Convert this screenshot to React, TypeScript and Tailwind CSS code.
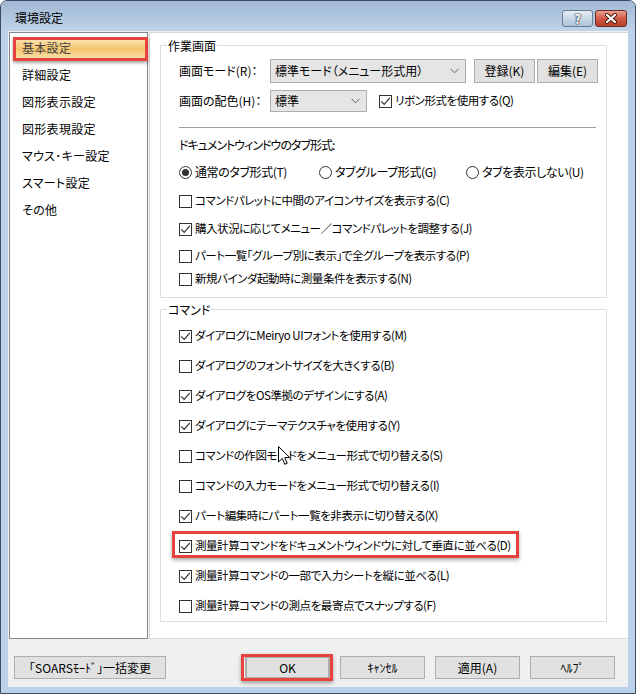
import React from "react";

const Check = ({ checked }: { checked: boolean }) => (
  <span className="w-[13px] h-[13px] border border-[#333333] bg-white flex items-center justify-center shrink-0">
    {checked && (
      <svg width="11" height="11" viewBox="0 0 11 11">
        <path d="M1.2 5.3 L4.2 8.4 L9.8 1.8" fill="none" stroke="#333333" strokeWidth="1.2" />
      </svg>
    )}
  </span>
);

const Radio = ({ checked }: { checked: boolean }) => (
  <span className="w-[13px] h-[13px] rounded-full border border-[#333333] bg-white flex items-center justify-center shrink-0">
    {checked && <span className="w-[7px] h-[7px] rounded-full bg-[#333333]" />}
  </span>
);

const CheckRow = ({ checked, label }: { checked: boolean; label: string }) => (
  <div className="flex items-center gap-[3px] h-[18px] whitespace-nowrap">
    <Check checked={checked} />
    <span className="text-[11.5px] tracking-[-0.45px]">{label}</span>
  </div>
);

const Chevron = () => (
  <svg width="9" height="6" viewBox="0 0 9 6" className="shrink-0">
    <polyline points="0.5,0.8 4.5,4.8 8.5,0.8" fill="none" stroke="#606060" strokeWidth="1" />
  </svg>
);

const navItems = ["基本設定", "詳細設定", "図形表示設定", "図形表現設定", "マウス･キー設定", "スマート設定", "その他"];

const commands: { label: string; checked: boolean; mark?: boolean }[] = [
  { label: "ダイアログにMeiryo UIフォントを使用する(M)", checked: true },
  { label: "ダイアログのフォントサイズを大きくする(B)", checked: false },
  { label: "ダイアログをOS準拠のデザインにする(A)", checked: true },
  { label: "ダイアログにテーマテクスチャを使用する(Y)", checked: true },
  { label: "コマンドの作図モードをメニュー形式で切り替える(S)", checked: false },
  { label: "コマンドの入力モードをメニュー形式で切り替える(I)", checked: false },
  { label: "パート編集時にパート一覧を非表示に切り替える(X)", checked: true },
  { label: "測量計算コマンドをドキュメントウィンドウに対して垂直に並べる(D)", checked: true, mark: true },
  { label: "測量計算コマンドの一部で入力シートを縦に並べる(L)", checked: true },
  { label: "測量計算コマンドの測点を最寄点でスナップする(F)", checked: false },
];

const Btn = ({ children, className = "" }: { children: React.ReactNode; className?: string }) => (
  <div className={`h-[23px] border border-[#adadad] bg-[#e1e1e1] flex items-center justify-center whitespace-nowrap ${className}`}>
    {children}
  </div>
);

export default function App() {
  return (
    <div className="w-[636px] h-[694px] relative bg-[#bcd1ea] rounded-t-[7px] border border-[#3d4b5c] flex flex-col overflow-hidden text-[12px] text-black font-['Noto_Sans_CJK_JP','Noto_Sans',sans-serif] [font-feature-settings:'palt'] leading-none">
      {/* Title bar */}
      <div className="h-[30px] shrink-0 flex items-center pt-[4px] pl-[14px] pr-[8px] bg-gradient-to-b from-[#a0b9d4] to-[#bfd3e9]">
        <span className="text-[12px] text-black">環境設定</span>
        <div className="ml-auto flex items-center gap-[2px]">
          <div className="w-[31px] h-[17px] rounded-[3px] border border-[#6b7c90] bg-gradient-to-b from-[#e6edf5] via-[#c9d7e6] to-[#aec3da] flex items-center justify-center">
            <span className="text-white font-bold text-[13px] leading-none [text-shadow:0_0_1px_#1f2f44,0_0_1px_#1f2f44,0_0_2px_#1f2f44]">?</span>
          </div>
          <div className="w-[32px] h-[17px] rounded-[3px] border border-[#6b2a22] bg-gradient-to-b from-[#e8a193] via-[#cf5a45] to-[#b8402c] flex items-center justify-center">
            <svg width="14" height="11" viewBox="0 0 14 11">
              <path d="M3 2 L11 9 M11 2 L3 9" stroke="#4a1810" strokeWidth="4" strokeLinecap="round" />
              <path d="M3 2 L11 9 M11 2 L3 9" stroke="#ffffff" strokeWidth="2.2" strokeLinecap="round" />
            </svg>
          </div>
        </div>
      </div>

      {/* Client */}
      <div className="mx-[7px] h-[656px] shrink-0 bg-[#f0f0f0] flex flex-col">
        <div className="flex h-[608px] pt-px">
          {/* Nav */}
          <div className="ml-px w-[139px] h-[607px] border border-[#828790] bg-white flex flex-col pt-px">
            {navItems.map((t, i) => (
              <div key={t} className="relative h-[27px] flex items-center pl-[12px] shrink-0">
                {i === 0 && (
                  <>
                    <span className="absolute left-[4px] right-[2px] top-[5px] bottom-[2px] bg-gradient-to-b from-[#fbe3b3] via-[#f5c46a] to-[#fbe2ae]" />
                    <span className="absolute left-[3px] -right-px top-[3px] bottom-0 border-[3px] border-[#e8423f] shadow-[0_2px_3px_rgba(0,0,0,0.35)]" />
                  </>
                )}
                <span className={`relative tracking-[0.3px] ${i === 0 ? "text-[#444]" : ""}`}>{t}</span>
              </div>
            ))}
          </div>

          {/* Content panel */}
          <div className="ml-px w-[479px] h-[607px] bg-white border-l border-t border-b border-[#d9d9d9] flex flex-col pl-[10px] pt-[12px]">
            {/* Group 1 */}
            <div className="relative w-[447px] h-[253px] border border-[#dcdcdc] flex flex-col pl-[18px] shrink-0">
              <span className="absolute left-[6px] -top-[8px] bg-white px-px h-[15px] flex items-center">作業画面</span>

              <div className="mt-[13px] h-[24px] flex items-center">
                <span className="w-[91px]">画面モード(R)：</span>
                <div className="w-[196px] h-[24px] border border-[#adadad] bg-[#e5e5e5] flex items-center pl-[4px] pr-[6px]">
                  <span className="flex-1">標準モード（メニュー形式用）</span>
                  <Chevron />
                </div>
                <Btn className="ml-[8px] w-[61px] h-[24px]">登録(K)</Btn>
                <Btn className="ml-[2px] w-[61px] h-[24px]">編集(E)</Btn>
              </div>

              <div className="mt-[7px] h-[22px] flex items-center">
                <span className="w-[91px]">画面の配色(H)：</span>
                <div className="w-[97px] h-[22px] border border-[#adadad] bg-[#e5e5e5] flex items-center pl-[4px] pr-[6px]">
                  <span className="flex-1">標準</span>
                  <Chevron />
                </div>
                <div className="ml-[12px]">
                  <CheckRow checked label="リボン形式を使用する(Q)" />
                </div>
              </div>

              <div className="mt-[15px] h-px w-[417px] bg-[#a0a0a0]" />

              <div className="mt-[8px] h-[18px] flex items-center tracking-[-1px]">ドキュメントウィンドウのタブ形式:</div>

              <div className="mt-[9px] h-[18px] flex items-center">
                <div className="w-[140px] flex items-center gap-[3px] whitespace-nowrap">
                  <Radio checked />
                  <span className="tracking-[-0.4px]">通常のタブ形式(T)</span>
                </div>
                <div className="w-[147px] flex items-center gap-[3px] whitespace-nowrap">
                  <Radio checked={false} />
                  <span className="tracking-[-0.4px]">タブグループ形式(G)</span>
                </div>
                <div className="flex items-center gap-[3px] whitespace-nowrap">
                  <Radio checked={false} />
                  <span className="tracking-[-0.4px]">タブを表示しない(U)</span>
                </div>
              </div>

              <div className="mt-[11px]">
                <CheckRow checked={false} label="コマンドパレットに中間のアイコンサイズを表示する(C)" />
              </div>
              <div className="mt-[10px]">
                <CheckRow checked label="購入状況に応じてメニュー／コマンドパレットを調整する(J)" />
              </div>
              <div className="mt-[9px]">
                <CheckRow checked={false} label="パート一覧｢グループ別に表示｣で全グループを表示する(P)" />
              </div>
              <div className="mt-[5px]">
                <CheckRow checked={false} label="新規バインダ起動時に測量条件を表示する(N)" />
              </div>
            </div>

            {/* Group 2 */}
            <div className="relative mt-[11px] w-[447px] h-[313px] border border-[#dcdcdc] flex flex-col pl-[18px] pt-[17px] gap-[12px] shrink-0">
              <span className="absolute left-[6px] -top-[8px] bg-white px-px h-[15px] flex items-center">コマンド</span>
              {commands.map((c) => (
                <div key={c.label} className="relative w-fit">
                  {c.mark && (
                    <span className="absolute -left-[7px] -right-[8px] -top-[6px] -bottom-[3px] border-[3px] border-[#e8423f] shadow-[0_2px_4px_rgba(0,0,0,0.35)]" />
                  )}
                  <CheckRow checked={c.checked} label={c.label} />
                </div>
              ))}
            </div>
          </div>
        </div>

        {/* Bottom buttons */}
        <div className="h-[48px] flex items-start pt-[17px] pl-[6px] pr-[13px]">
          <Btn className="w-[152px]">｢SOARSﾓｰﾄﾞ｣一括変更</Btn>
          <div className="ml-auto flex items-start gap-[10px]">
            <div className="relative">
              <Btn className="w-[85px] border-2 border-[#0078d7]">OK</Btn>
              <span className="absolute -left-[4px] -right-[3px] -top-[2px] -bottom-[2px] border-[3px] border-[#e8423f] shadow-[0_2px_4px_rgba(0,0,0,0.35)]" />
            </div>
            <Btn className="w-[85px]">ｷｬﾝｾﾙ</Btn>
            <Btn className="w-[85px]">適用(A)</Btn>
            <Btn className="w-[85px]">ﾍﾙﾌﾟ</Btn>
          </div>
        </div>
      </div>

      {/* Mouse cursor */}
      <svg className="absolute left-[277px] top-[445px]" width="13" height="20" viewBox="0 0 13 20">
        <path d="M0.5 0.5 L0.5 16 L4.3 12.4 L6.8 18.3 L9.2 17.3 L6.8 11.6 L11.8 11.6 Z" fill="#ffffff" stroke="#000000" strokeWidth="1" strokeLinejoin="miter" />
      </svg>
    </div>
  );
}
